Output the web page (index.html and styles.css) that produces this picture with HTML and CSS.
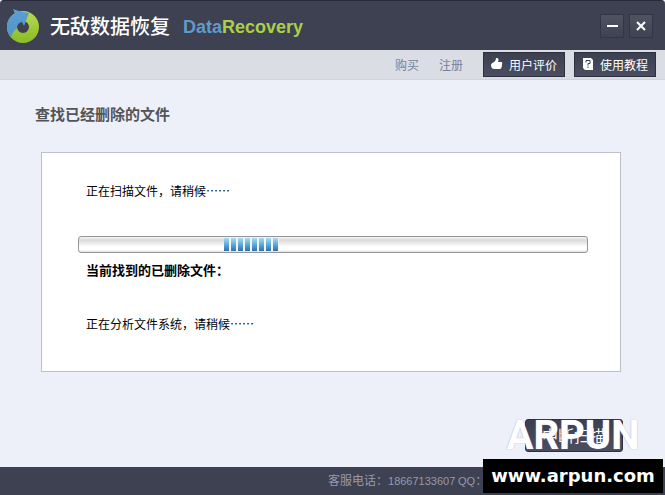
FILE: index.html
```html
<!DOCTYPE html>
<html lang="zh-CN">
<head>
    <meta charset="UTF-8">
    <meta name="viewport" content="width=device-width, initial-scale=1.0">
    <title>无敌数据恢复</title>
    <link rel="stylesheet" href="styles.css">
</head>
<body>
    <header class="titlebar">
        <svg class="logo" viewBox="0 0 36 36" aria-hidden="true">
            <defs>
                <linearGradient id="green" x1="0" y1="0" x2="0" y2="1">
                    <stop offset="0" stop-color="#b4d64c"/>
                    <stop offset="1" stop-color="#8fc02a"/>
                </linearGradient>
                <linearGradient id="blue" x1="0" y1="0" x2="0" y2="1">
                    <stop offset="0" stop-color="#5b9fd4"/>
                    <stop offset="1" stop-color="#5593c6"/>
                </linearGradient>
            </defs>
            <circle cx="17" cy="19" r="11" fill="none" stroke="url(#green)" stroke-width="10"/>
            <path d="M5 29 C0 24 0 16 3 11 C5 8 7 7 9 6 L7 1 L13 3 L23 5 L18 18 L16 14 C12 15 11 17 11 20 C9 22 6 25 5 29 Z" fill="url(#blue)"/>
        </svg>
        <h1>无敌数据恢复</h1>
        <p class="brand"><span class="data">Data</span><span class="recovery">Recovery</span></p>
        <div class="window-buttons">
            <button type="button" aria-label="最小化">
                <svg viewBox="0 0 12 12"><path d="M1 6H12"/></svg>
            </button>
            <button type="button" aria-label="关闭">
                <svg viewBox="0 0 12 12"><path d="M2 2L10 10M10 2L2 10"/></svg>
            </button>
        </div>
    </header>

    <nav class="toolbar">
        <a href="#buy">购买</a>
        <a href="#register">注册</a>
        <button type="button" class="dark-button">
            <svg viewBox="0 0 12 12"><path d="M0 7C0 6 1 5 3 4C4 3 5 2 5 0C8 0 8 2 7 4H10C12 4 11 6 11 7C11 9 10 11 9 11H3C1 11 0 9 0 7Z"/></svg>
            用户评价
        </button>
        <button type="button" class="dark-button">
            <svg viewBox="0 0 12 12"><path d="M1 0H9L11 2V12H3L1 10Z"/><path class="mark" d="M4 4.500V2.500H8V5.500H6V7.500M6 8.500V10"/></svg>
            使用教程
        </button>
    </nav>

    <main>
        <h2>查找已经删除的文件</h2>
        <section class="panel">
            <p>正在扫描文件，请稍候……</p>
            <div class="progress" role="progressbar" aria-label="扫描进度">
                <div class="chunks"></div>
            </div>
            <p class="found">当前找到的已删除文件：</p>
            <p>正在分析文件系统，请稍候……</p>
        </section>
        <div class="actions">
            <button type="button" class="dark-button stop">中断扫描</button>
        </div>
    </main>

    <footer>客服电话：<span class="number">18667133607</span> <span class="number">QQ</span>：</footer>

    <div class="watermark">
        <div class="watermark-name">ARPUN</div>
        <div class="watermark-url">www.arpun.com</div>
    </div>
</body>
</html>
```
FILE: styles.css
```css
* {
    margin: 0;
    padding: 0;
    box-sizing: border-box;
}

body {
    display: flex;
    flex-direction: column;
    position: relative;
    min-height: 100vh;
    background-color: #edf0f9;
    color: #000;
    font-family: "Noto Sans CJK SC", sans-serif;
    font-size: 12px;
    line-height: 18px;
}

button {
    font-family: inherit;
    cursor: pointer;
}

/* Title bar */
.titlebar {
    display: flex;
    align-items: center;
    height: 50px;
    padding: 0 12px 0 6px;
    background-color: #3d4151;
    border-top: 1px solid #292c38;
    border-radius: 4px 4px 0 0;
}

.logo {
    width: 36px;
    height: 36px;
}

h1 {
    margin-left: 8px;
    color: #fff;
    font-size: 20px;
    font-weight: 500;
    line-height: 30px;
}

.brand {
    margin-left: 13px;
    padding-top: 2px;
    font-family: "Liberation Sans", Arial, sans-serif;
    font-size: 18px;
    font-weight: bold;
    line-height: 24px;
}

.data {
    color: #5f9bcb;
}

.recovery {
    color: #a9d147;
}

.window-buttons {
    display: flex;
    gap: 5px;
    margin-left: auto;
}

.window-buttons button {
    display: flex;
    align-items: center;
    justify-content: center;
    width: 24px;
    height: 24px;
    background: linear-gradient(#505362, #3f4252);
    border: 1px solid #333644;
}

.window-buttons svg {
    width: 12px;
    height: 12px;
    fill: none;
    stroke: #fff;
    stroke-width: 2;
}

/* Toolbar */
.toolbar {
    display: flex;
    align-items: center;
    justify-content: flex-end;
    height: 30px;
    padding: 0 9px;
    background-color: #dadde4;
    border-bottom: 1px solid #d0d3da;
}

.toolbar a {
    margin-right: 20px;
    color: #7b7f9b;
    line-height: 20px;
    text-decoration: none;
}

.dark-button {
    display: flex;
    align-items: center;
    justify-content: center;
    gap: 6px;
    width: 82px;
    height: 25px;
    padding-bottom: 1px;
    background: linear-gradient(#3b3f50, #4a4e60);
    border: 1px solid #2d303e;
    color: #fff;
    font-size: 12px;
}

.toolbar .dark-button + .dark-button {
    margin-left: 9px;
}

.dark-button svg {
    width: 12px;
    height: 12px;
    fill: #fff;
}

.dark-button .mark {
    fill: none;
    stroke: #3b3f50;
}

/* Main area */
main {
    flex: 1;
    padding: 22px 44px 0 35px;
}

h2 {
    color: #535457;
    font-size: 15px;
    font-weight: bold;
    line-height: 24px;
}

.panel {
    min-height: 220px;
    margin: 26px 0 0 6px;
    padding: 29px 32px 0 36px;
    background-color: #fff;
    border: 1px solid #bcc0c8;
}

.panel p {
    padding-left: 8px;
}

.progress {
    height: 17px;
    margin-top: 36px;
    padding: 1px;
    background: linear-gradient(#f6f6f6, #dadada 20%, #fff 65%, #fff 85%, #e0e0e0);
    border: 1px solid #969696;
    border-radius: 3px;
}

.chunks {
    width: 55px;
    height: 13px;
    margin-left: 144px;
    background:
        repeating-linear-gradient(to right, transparent 0 5px, #f4f4f4 5px 7px),
        linear-gradient(#a9dcf3, #5eabd8 50%, #2f70ab);
}

.panel .found {
    margin: 8px 0 36px;
    font-size: 13px;
    font-weight: bold;
}

.actions {
    display: flex;
    justify-content: flex-end;
    margin: 47px -2px 15px 0;
}

.stop {
    width: 98px;
    height: 33px;
    border-radius: 3px;
    font-size: 16px;
}

/* Footer */
footer {
    height: 28px;
    padding-left: 328px;
    background-color: #3d4151;
    color: #969aab;
    line-height: 26px;
}

.number {
    font-family: "Liberation Sans", Arial, sans-serif;
    font-size: 11px;
}

/* Watermark */
.watermark {
    position: absolute;
    right: 2px;
    bottom: 2px;
    width: 180px;
    color: #fff;
    text-align: center;
    pointer-events: none;
}

.watermark-name {
    font-family: Roboto, sans-serif;
    font-size: 40px;
    font-weight: bold;
    line-height: 46px;
    text-shadow: 0 0 1px #8a8fd0;
}

.watermark-url {
    background-color: #000;
    font-family: "DejaVu Sans", Verdana, sans-serif;
    font-size: 18px;
    font-weight: bold;
    line-height: 34px;
}
```
